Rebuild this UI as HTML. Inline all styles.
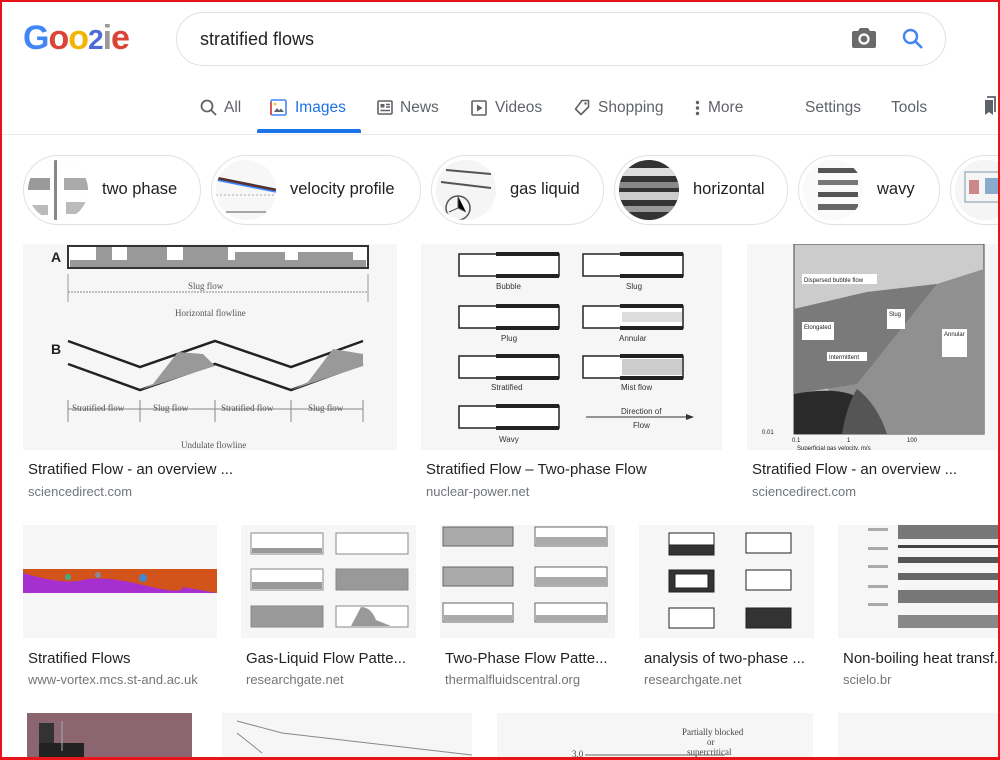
<!DOCTYPE html>
<html><head><meta charset="utf-8"><style>
*{margin:0;padding:0;box-sizing:border-box}
body{width:1000px;height:760px;overflow:hidden;background:#fff;font-family:"Liberation Sans",Arial,sans-serif;position:relative}
.frame{position:absolute;left:0;top:0;width:1000px;height:760px;border:2px solid #e8141a;border-bottom-width:3px;z-index:10;pointer-events:none}
.abs{position:absolute}
.search{left:176px;top:12px;width:770px;height:54px;border:1px solid #dfe1e5;border-radius:27px}
.search span{position:absolute;left:23px;top:16px;font-size:18px;color:#222}
.tab{position:absolute;top:99px;font-size:15.5px;color:#5f6368}
.hdr{left:0;top:134px;width:1000px;height:1px;background:#ebebeb}
.chip{position:absolute;top:155px;height:70px;border:1px solid #dfe1e5;border-radius:35px;background:#fff}
.chip .c{position:absolute;left:4px;top:4px;width:60px;height:60px;border-radius:50%;overflow:hidden;background:#eee}
.chip span{position:absolute;top:24px;font-size:16.5px;color:#202124}
.img{position:absolute;background:#f6f6f6;overflow:hidden}
.t{position:absolute;font-size:15px;color:#222;white-space:nowrap}
.d{position:absolute;font-size:13px;color:#70757a;white-space:nowrap}
</style></head><body>
<div class="frame"></div>

<div class="abs" style="left:23px;top:18px;font-size:34px;font-weight:bold;letter-spacing:-1px;line-height:40px">
<span style="color:#4285f4">G</span><span style="color:#db4437">o</span><span style="color:#f4b400">o</span><span style="color:#4a6cd4;font-size:28px">2</span><span style="color:#999">i</span><span style="color:#db4437">e</span></div>

<div class="abs search"><span>stratified flows</span>
<svg class="abs" style="left:675px;top:14px" width="24" height="22" viewBox="0 0 24 22"><path d="M8 1h8l2 3h4a2 2 0 0 1 2 2v13a2 2 0 0 1-2 2H2a2 2 0 0 1-2-2V6a2 2 0 0 1 2-2h4z" fill="#6b6b6b"/><circle cx="12" cy="12" r="4.5" fill="none" stroke="#fff" stroke-width="2.2"/></svg>
<svg class="abs" style="left:724px;top:14px" width="24" height="24" viewBox="0 0 24 24"><circle cx="9.5" cy="9.5" r="6.5" fill="none" stroke="#4285f4" stroke-width="2.4"/><path d="M14.5 14.5l6.5 6.5" stroke="#4285f4" stroke-width="2.6"/></svg>
</div>

<svg class="abs" style="left:200px;top:99px" width="17" height="17" viewBox="0 0 17 17"><circle cx="7" cy="7" r="5.5" fill="none" stroke="#5f6368" stroke-width="1.8"/><path d="M11 11l5 5" stroke="#5f6368" stroke-width="1.8"/></svg>
<div class="tab" style="left:224px">All</div>
<svg class="abs" style="left:270px;top:99px" width="17" height="17" viewBox="0 0 17 17"><rect x="1" y="1" width="15" height="15" rx="1.5" fill="none" stroke="#4285f4" stroke-width="1.6"/><path d="M1 16V3" stroke="#ea4335" stroke-width="1.6"/><path d="M4 13l3-4 2 2.5 2-2 3 3.5z" fill="#5f6368"/><circle cx="5" cy="5" r="1.3" fill="#fbbc05"/></svg>
<div class="tab" style="left:295px;color:#1a73e8">Images</div>
<div class="abs" style="left:257px;top:129px;width:104px;height:4px;background:#1a73e8;border-radius:2px 2px 0 0"></div>
<svg class="abs" style="left:377px;top:100px" width="16" height="15" viewBox="0 0 16 15"><rect x="1" y="1" width="14" height="13" rx="1" fill="none" stroke="#5f6368" stroke-width="1.6"/><rect x="3.5" y="4" width="4" height="3.5" fill="#5f6368"/><path d="M9 4.5h4M9 7h4M3.5 10.5h9.5" stroke="#5f6368" stroke-width="1.4"/></svg>
<div class="tab" style="left:400px">News</div>
<svg class="abs" style="left:471px;top:100px" width="16" height="16" viewBox="0 0 16 16"><rect x="1" y="1" width="14" height="14" rx="1" fill="none" stroke="#5f6368" stroke-width="1.6"/><path d="M6 4.5v7l5.5-3.5z" fill="#5f6368"/></svg>
<div class="tab" style="left:495px">Videos</div>
<svg class="abs" style="left:573px;top:99px" width="18" height="18" viewBox="0 0 18 18"><path d="M9 1.5h6.5v6.5L8 15.5 2.5 10z" fill="none" stroke="#5f6368" stroke-width="1.6" stroke-linejoin="round"/><circle cx="12.5" cy="4.5" r="1.2" fill="#5f6368"/></svg>
<div class="tab" style="left:598px">Shopping</div>
<svg class="abs" style="left:695px;top:100px" width="5" height="16" viewBox="0 0 5 16"><circle cx="2.5" cy="2.5" r="1.7" fill="#5f6368"/><circle cx="2.5" cy="8" r="1.7" fill="#5f6368"/><circle cx="2.5" cy="13.5" r="1.7" fill="#5f6368"/></svg>
<div class="tab" style="left:708px">More</div>
<div class="tab" style="left:805px">Settings</div>
<div class="tab" style="left:891px">Tools</div>
<svg class="abs" style="left:982px;top:96px" width="16" height="22" viewBox="0 0 16 22"><path d="M3 4h8v15l-4-3-4 3z" fill="#5f6368"/><path d="M5 1h8v15" fill="none" stroke="#5f6368" stroke-width="1.8"/></svg>
<div class="abs hdr"></div>

<div class="chip" style="left:23px;width:178px"><div class="c"><svg width="60" height="60"><rect width="60" height="60" fill="#fff"/><rect x="0" y="18" width="22" height="12" fill="#999"/><rect x="36" y="18" width="24" height="12" fill="#aaa"/><rect x="26" y="0" width="3" height="60" fill="#888"/><rect x="0" y="45" width="20" height="10" fill="#bbb"/><rect x="38" y="42" width="22" height="12" fill="#bbb"/></svg></div><span style="left:78px">two phase</span></div>
<div class="chip" style="left:211px;width:210px"><div class="c"><svg width="60" height="60"><rect width="60" height="60" fill="#f7f7f7"/><path d="M0 18 Q30 24 60 30" stroke="#533" stroke-width="3" fill="none"/><path d="M0 20 Q30 26 60 32" stroke="#48f" stroke-width="1.5" fill="none"/><path d="M0 35h60" stroke="#aaa" stroke-dasharray="2 2"/><path d="M10 52h40" stroke="#555"/></svg></div><span style="left:78px">velocity profile</span></div>
<div class="chip" style="left:431px;width:173px"><div class="c"><svg width="60" height="60"><rect width="60" height="60" fill="#f5f5f5"/><path d="M10 10l45 4M5 22l50 6" stroke="#555" stroke-width="2"/><circle cx="22" cy="48" r="12" fill="none" stroke="#555" stroke-width="1.5"/><path d="M22 36v12l8 4M22 48l-9 4" stroke="#555"/></svg></div><span style="left:78px">gas liquid</span></div>
<div class="chip" style="left:614px;width:174px"><div class="c"><svg width="60" height="60"><rect width="60" height="60" fill="#333"/><rect y="8" width="60" height="8" fill="#ddd"/><rect y="22" width="60" height="6" fill="#888"/><rect y="32" width="60" height="8" fill="#ccc"/><rect y="46" width="60" height="6" fill="#999"/></svg></div><span style="left:78px">horizontal</span></div>
<div class="chip" style="left:798px;width:142px"><div class="c"><svg width="60" height="60"><rect width="60" height="60" fill="#fafafa"/><rect x="15" y="8" width="40" height="5" fill="#555"/><rect x="15" y="20" width="40" height="5" fill="#777"/><rect x="15" y="32" width="40" height="5" fill="#555"/><rect x="15" y="44" width="40" height="6" fill="#666"/></svg></div><span style="left:78px">wavy</span></div>
<div class="chip" style="left:950px;width:80px"><div class="c"><svg width="60" height="60"><rect width="60" height="60" fill="#f5f5f5"/><rect x="10" y="12" width="40" height="30" fill="none" stroke="#79a" /><rect x="14" y="20" width="10" height="14" fill="#c88"/><rect x="30" y="18" width="14" height="16" fill="#8ac"/></svg></div></div>

<div class="img" style="left:23px;top:244px;width:374px;height:206px">
<svg width="374" height="206" font-family="Liberation Serif" font-size="9" fill="#555">
<text x="28" y="18" font-family="Liberation Sans" font-weight="bold" font-size="14" fill="#222">A</text>
<rect x="45" y="2" width="300" height="22" fill="#fff" stroke="#333" stroke-width="2"/>
<g fill="#999"><rect x="73" y="3" width="16" height="20"/><rect x="104" y="3" width="40" height="20"/><rect x="160" y="3" width="45" height="20"/><rect x="212" y="8" width="50" height="15"/><rect x="275" y="8" width="55" height="15"/><rect x="47" y="16" width="296" height="7"/></g>
<path d="M45 48h300" stroke="#888" stroke-dasharray="2 1"/><path d="M45 30v28M345 30v28" stroke="#999"/>
<text x="165" y="45">Slug flow</text><text x="152" y="72">Horizontal flowline</text>
<text x="28" y="110" font-family="Liberation Sans" font-weight="bold" font-size="14" fill="#222">B</text>
<path d="M45 97 L117 123 L192 97 L268 123 L340 97" stroke="#222" stroke-width="2.5" fill="none"/>
<path d="M45 120 L117 146 L192 120 L268 146 L340 120" stroke="#222" stroke-width="2.5" fill="none"/>
<path d="M130 140 L155 108 L180 110 L192 122 L117 146z M285 138 L310 105 L340 110 L340 122 L268 146z" fill="#999"/>
<path d="M45 165h295M45 156v22M117 156v22M192 156v22M268 156v22M340 156v22" stroke="#888"/>
<text x="49" y="167">Stratified flow</text><text x="130" y="167">Slug flow</text><text x="198" y="167">Stratified flow</text><text x="285" y="167">Slug flow</text>
<text x="158" y="204">Undulate flowline</text></svg></div>

<div class="img" style="left:421px;top:244px;width:301px;height:206px">
<svg width="301" height="206" font-size="8" fill="#333">
<g stroke="#222" fill="#fff" stroke-width="1.5">
<rect x="38" y="10" width="100" height="22"/><rect x="162" y="10" width="100" height="22"/>
<rect x="38" y="62" width="100" height="22"/><rect x="162" y="62" width="100" height="22"/>
<rect x="38" y="112" width="100" height="22"/><rect x="162" y="112" width="100" height="22"/>
<rect x="38" y="162" width="100" height="22"/></g>
<g fill="#222"><rect x="75" y="8" width="63" height="4"/><rect x="75" y="30" width="63" height="4"/><rect x="199" y="8" width="63" height="4"/><rect x="199" y="30" width="63" height="4"/><rect x="75" y="60" width="63" height="4"/><rect x="75" y="82" width="63" height="4"/><rect x="199" y="60" width="63" height="4"/><rect x="199" y="82" width="63" height="4"/><rect x="75" y="110" width="63" height="4"/><rect x="75" y="132" width="63" height="4"/><rect x="199" y="110" width="63" height="4"/><rect x="199" y="132" width="63" height="4"/><rect x="75" y="160" width="63" height="4"/><rect x="75" y="182" width="63" height="4"/></g>
<rect x="201" y="115" width="60" height="16" fill="#ccc"/><rect x="201" y="68" width="60" height="10" fill="#ddd"/>
<text x="75" y="45">Bubble</text><text x="205" y="45">Slug</text><text x="80" y="97">Plug</text><text x="198" y="97">Annular</text><text x="70" y="146">Stratified</text><text x="200" y="146">Mist flow</text><text x="78" y="198">Wavy</text>
<path d="M165 173h100" stroke="#333"/><path d="M265 170l8 3-8 3z"/><text x="200" y="170">Direction of</text><text x="212" y="184">Flow</text></svg></div>

<div class="img" style="left:747px;top:244px;width:250px;height:206px">
<svg width="250" height="206" font-size="6" fill="#222">
<rect x="47" y="0" width="190" height="190" fill="#ccc" stroke="#444"/>
<path d="M47 65 L120 48 L190 40 L237 25 L237 190 L100 190z" fill="#909090"/>
<path d="M47 65 L120 48 L190 40 L110 140 L47 150z" fill="#7a7a7a"/>
<path d="M47 150 Q100 140 120 160 L125 190 L47 190z" fill="#2a2a2a"/>
<path d="M110 145 Q130 160 140 190 L95 190 Q100 160 110 145z" fill="#555"/>
<rect x="55" y="30" width="75" height="10" fill="#fff"/><text x="57" y="38">Dispersed bubble flow</text>
<rect x="55" y="78" width="32" height="18" fill="#fff"/><text x="57" y="85">Elongated</text>
<rect x="80" y="108" width="40" height="9" fill="#fff"/><text x="82" y="115">Intermittent</text>
<rect x="195" y="85" width="25" height="28" fill="#fff"/><text x="197" y="92">Annular</text>
<rect x="140" y="65" width="18" height="20" fill="#fff"/><text x="142" y="72">Slug</text>
<text x="15" y="190">0.01</text><text x="45" y="198">0.1</text><text x="100" y="198">1</text><text x="160" y="198">100</text>
<text x="50" y="206">Superficial gas velocity, m/s</text></svg></div>

<div class="t" style="left:28px;top:461px">Stratified Flow - an overview ...</div><div class="d" style="left:28px;top:484px">sciencedirect.com</div>
<div class="t" style="left:426px;top:461px">Stratified Flow – Two-phase Flow</div><div class="d" style="left:426px;top:484px">nuclear-power.net</div>
<div class="t" style="left:752px;top:461px">Stratified Flow - an overview ...</div><div class="d" style="left:752px;top:484px">sciencedirect.com</div>

<div class="img" style="left:23px;top:525px;width:194px;height:113px"><svg width="194" height="113"><rect y="44" width="194" height="24" fill="#d2541b"/><path d="M0 48 Q40 60 60 55 T120 60 T160 62 L194 68 L0 68z" fill="#a62fcf"/><circle cx="45" cy="52" r="3" fill="#4a8"/><circle cx="120" cy="53" r="4" fill="#48c"/><circle cx="75" cy="50" r="3" fill="#889"/></svg></div>
<div class="img" style="left:241px;top:525px;width:175px;height:113px"><svg width="175" height="113" fill="#fff" stroke="#888"><rect x="10" y="8" width="72" height="21"/><rect x="95" y="8" width="72" height="21"/><rect x="10" y="44" width="72" height="21"/><rect x="95" y="44" width="72" height="21" fill="#999"/><rect x="10" y="81" width="72" height="21" fill="#999"/><rect x="95" y="81" width="72" height="21"/><g stroke="none" fill="#999"><rect x="11" y="23" width="70" height="5"/><rect x="11" y="57" width="70" height="7"/><path d="M120 82 Q130 82 135 95 L150 101 L110 101 z"/></g></svg></div>
<div class="img" style="left:440px;top:525px;width:175px;height:113px"><svg width="175" height="113" fill="#fff" stroke="#666"><rect x="3" y="2" width="70" height="19" fill="#aaa"/><rect x="95" y="2" width="72" height="19"/><rect x="3" y="42" width="70" height="19" fill="#aaa"/><rect x="95" y="42" width="72" height="19"/><rect x="3" y="78" width="70" height="19"/><rect x="95" y="78" width="72" height="19"/><g stroke="none" fill="#aaa"><rect x="96" y="12" width="70" height="8"/><rect x="96" y="52" width="70" height="8"/><rect x="4" y="90" width="68" height="6"/><rect x="96" y="90" width="70" height="6"/></g></svg></div>
<div class="img" style="left:639px;top:525px;width:175px;height:113px"><svg width="175" height="113" fill="#fff" stroke="#222"><rect x="30" y="8" width="45" height="22" /><rect x="30" y="20" width="45" height="10" fill="#333"/><rect x="107" y="8" width="45" height="20"/><rect x="30" y="45" width="45" height="22" fill="#333"/><rect x="36" y="49" width="33" height="14"/><rect x="107" y="45" width="45" height="20"/><rect x="30" y="83" width="45" height="20"/><rect x="107" y="83" width="45" height="20" fill="#333"/></svg></div>
<div class="img" style="left:838px;top:525px;width:162px;height:113px"><svg width="162" height="113"><rect x="60" y="0" width="125" height="14" fill="#777"/><rect x="60" y="20" width="125" height="3" fill="#444"/><rect x="60" y="32" width="125" height="6" fill="#555"/><rect x="60" y="48" width="125" height="7" fill="#666"/><rect x="60" y="65" width="125" height="13" fill="#777"/><rect x="60" y="90" width="125" height="13" fill="#888"/><g fill="#aaa"><rect x="30" y="3" width="20" height="3"/><rect x="30" y="22" width="20" height="3"/><rect x="30" y="40" width="20" height="3"/><rect x="30" y="60" width="20" height="3"/><rect x="30" y="78" width="20" height="3"/></g></svg></div>

<div class="t" style="left:28px;top:650px">Stratified Flows</div><div class="d" style="left:28px;top:672px">www-vortex.mcs.st-and.ac.uk</div>
<div class="t" style="left:246px;top:650px">Gas-Liquid Flow Patte...</div><div class="d" style="left:246px;top:672px">researchgate.net</div>
<div class="t" style="left:445px;top:650px">Two-Phase Flow Patte...</div><div class="d" style="left:445px;top:672px">thermalfluidscentral.org</div>
<div class="t" style="left:644px;top:650px">analysis of two-phase ...</div><div class="d" style="left:644px;top:672px">researchgate.net</div>
<div class="t" style="left:843px;top:650px">Non-boiling heat transf...</div><div class="d" style="left:843px;top:672px">scielo.br</div>

<div class="img" style="left:27px;top:713px;width:165px;height:47px;background:#8b6670"><svg width="165" height="47"><rect x="12" y="10" width="15" height="37" fill="#333"/><rect x="12" y="30" width="45" height="17" fill="#222"/><path d="M35 8v30" stroke="#aaa"/></svg></div>
<div class="img" style="left:222px;top:713px;width:250px;height:47px"><svg width="250" height="47"><path d="M15 8 L60 20 L250 42" stroke="#888" fill="none"/><path d="M15 20 L40 40" stroke="#888"/></svg></div>
<div class="img" style="left:497px;top:713px;width:316px;height:47px"><svg width="316" height="47" font-family="Liberation Serif" font-size="9" fill="#444"><text x="185" y="22">Partially blocked</text><text x="210" y="32">or</text><text x="190" y="42">supercritical</text><text x="75" y="44">3.0</text><path d="M88 42h140" stroke="#666"/></svg></div>
<div class="img" style="left:838px;top:713px;width:162px;height:47px"></div>
</body></html>
